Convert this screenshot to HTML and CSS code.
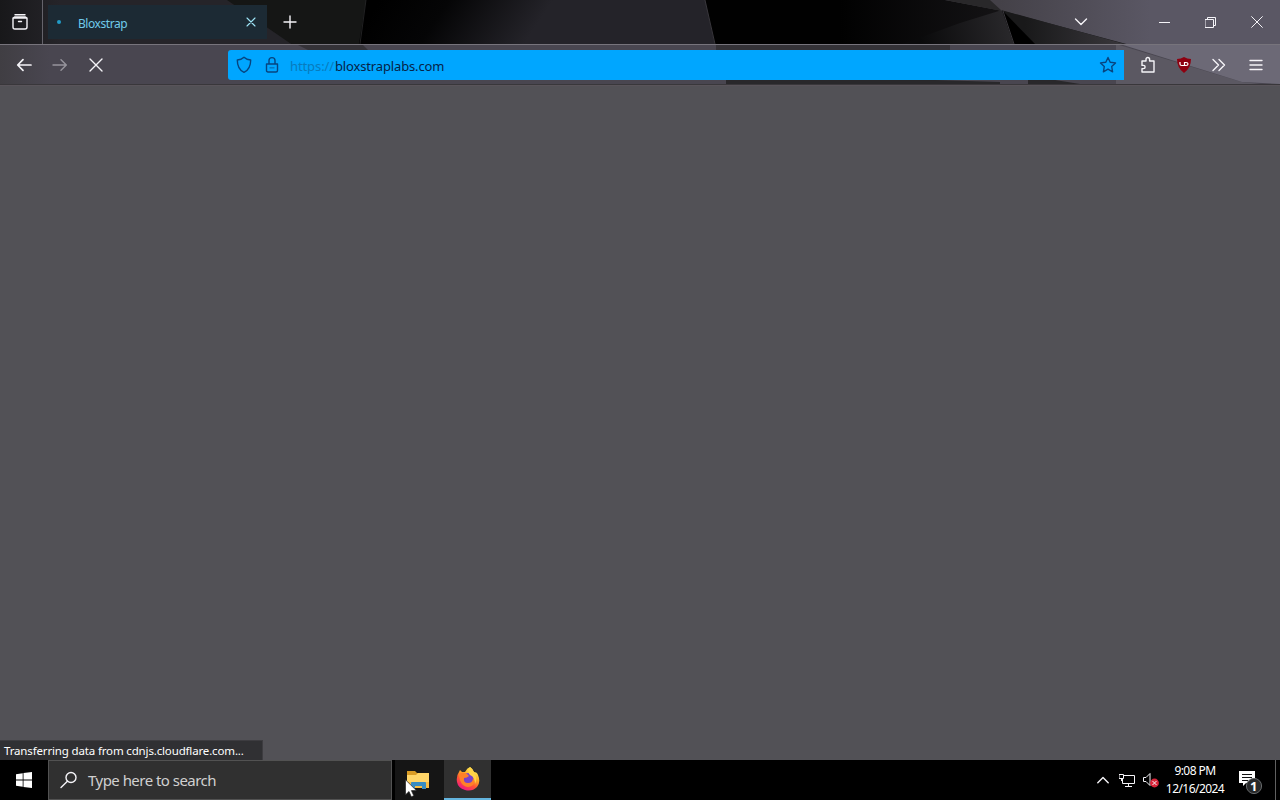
FILE: index.html
```html
<!DOCTYPE html>
<html lang="en">
<head>
<meta charset="utf-8">
<title>Bloxstrap</title>
<link rel="stylesheet" href="styles.css">
</head>
<body>
<div class="desktop">
  <header class="chrome">
    <svg class="theme" viewBox="0 0 1280 86" preserveAspectRatio="none" aria-hidden="true">
      <defs>
        <linearGradient id="mid" x1="380" y1="0" x2="500" y2="80" gradientUnits="userSpaceOnUse"><stop offset="0" stop-color="#000"/><stop offset=".4" stop-color="#050506"/><stop offset="1" stop-color="#242329"/></linearGradient>
        <linearGradient id="dark" x1="840" y1="0" x2="1010" y2="0" gradientUnits="userSpaceOnUse"><stop offset="0" stop-color="#010101"/><stop offset="1" stop-color="#151416"/></linearGradient>
        <linearGradient id="facet" x1="920" y1="40" x2="1010" y2="20" gradientUnits="userSpaceOnUse"><stop offset="0" stop-color="#0a0a0b"/><stop offset="1" stop-color="#29282b"/></linearGradient>
        <linearGradient id="right" x1="1000" y1="0" x2="1150" y2="0" gradientUnits="userSpaceOnUse"><stop offset="0" stop-color="#444148"/><stop offset="1" stop-color="#5a5764"/></linearGradient>
        <linearGradient id="slope" x1="1025" y1="0" x2="1130" y2="0" gradientUnits="userSpaceOnUse"><stop offset="0" stop-color="#19191a"/><stop offset="1" stop-color="#3b393e"/></linearGradient>
        <linearGradient id="left" x1="0" y1="0" x2="60" y2="0" gradientUnits="userSpaceOnUse"><stop offset="0" stop-color="#18181a"/><stop offset="1" stop-color="#252429"/></linearGradient>
        <linearGradient id="bar" x1="0" y1="0" x2="50" y2="0" gradientUnits="userSpaceOnUse"><stop offset="0" stop-color="#403e43"/><stop offset="1" stop-color="#494650"/></linearGradient>
      </defs>
      <path fill="url(#left)" d="M0 0H230L300 48V86H0z"/>
      <path fill="#151615" d="M227 0H366L358 50H300z"/>
      <path fill="url(#mid)" d="M366 0H705L716 50H358z"/>
      <path fill="url(#dark)" d="M705 0H990L1002 10L1016 50H716z"/>
      <path fill="url(#facet)" d="M1002 10L960 23L900 45H1014z"/>
      <path fill="url(#right)" d="M945 0H1280V86H1242L1130 45L1003 11z"/>
      <path fill="#29282a" d="M945 0H990L1002 11z"/>
      <path fill="url(#slope)" d="M1003 10.5L1128 45H1014z"/>
      <path fill="#000" d="M1002 10L1036 45H1014z"/>
      <path stroke="#454349" stroke-width=".8" fill="none" d="M705 0L715 44M1003 11L1014 44"/>
      <path stroke="#29292b" stroke-width=".8" d="M366 0L360 44"/>
      <path fill="url(#bar)" d="M0 44H1280V86H0z"/>
      <path fill="#5b5862" d="M1116 44L1242 82L1280 86H1116z"/>
      <path fill="#6c6976" d="M1120 44H1280V84L1242 82z"/>
      <path fill="#343237" d="M296 44H362L368 50H308zM716 45H950V50H716z"/>
      <path fill="#29282b" d="M726 80H935L1000 82V84H726zM1028 80H1055L1080 84H1028z"/>
      <path stroke="#77747c" d="M0 44.5H1280"/>
      <path stroke="#39373b" d="M0 84.5H1280"/>
      <path stroke="#59545a" d="M0 85.5H1280"/>
    </svg>
    <div class="tabs">
      <div class="view"><svg width="18" height="18" viewBox="0 0 18 18"><path d="M4 1.8h10M2 5h14v9q0 2-2 2H4q-2 0-2-2zM2 5l1.5-1h11L16 5M7.5 8.5h3" class="line"/></svg></div>
      <div class="tab"><i class="loading"></i><span class="tab-title">Bloxstrap</span><svg width="10" height="10" viewBox="0 0 10 10"><path d="M1 1l8 8M9 1L1 9" class="line"/></svg></div>
      <svg class="plus" width="14" height="14" viewBox="0 0 14 14"><path d="M7 1v12M1 7h12" class="line"/></svg>
      <div class="window-buttons">
        <svg width="14" height="10" viewBox="0 0 14 10"><path d="M1.5 2l5.5 5.5L12.5 2" class="line"/></svg>
        <svg class="min" width="11" height="11" viewBox="0 0 11 11"><path d="M0 5.5h11" class="line thin"/></svg>
        <svg class="restore" width="11" height="11" viewBox="0 0 11 11"><path d="M.5 2.5h8v8h-8zM2.5 2.5v-2h8v8h-2" class="line thin"/></svg>
        <svg class="close" width="12" height="12" viewBox="0 0 12 12"><path d="M.7.7l10.6 10.6M11.3.7L.7 11.3" class="line thin"/></svg>
      </div>
    </div>
    <div class="toolbar">
      <svg class="back" width="16" height="16" viewBox="0 0 16 16"><path d="M15 8H2M7 2.7L1.7 8 7 13.3" class="line bold"/></svg>
      <svg class="forward" width="16" height="16" viewBox="0 0 16 16"><path d="M1 8h13M9 2.7L14.3 8 9 13.3" class="line"/></svg>
      <svg class="stop" width="14" height="14" viewBox="0 0 14 14"><path d="M1 1l12 12M13 1L1 13" class="line"/></svg>
      <div class="address">
        <svg width="16" height="18" viewBox="0 0 16 18"><path d="M8 1.2Q10.5 3.7 14.7 4C14.7 10 12.5 14.3 8 16.4C3.5 14.3 1.3 10 1.3 4Q5.5 3.7 8 1.2z" class="ink"/></svg>
        <svg class="lock" width="14" height="18" viewBox="0 0 14 18"><path d="M1.5 8h11v6.5q0 1.5-1.5 1.5H3q-1.5 0-1.5-1.5zM4 8V4.6a3 3 0 0 1 6 0V8" class="ink"/><path d="M4.5 11.8h5" class="ink faint"/></svg>
        <span class="url"><span class="scheme">https://</span><span class="host">bloxstraplabs.com</span></span>
        <svg class="star" width="18" height="18" viewBox="0 0 18 18"><path d="M9 1.5l2.2 4.7 5.3.7-3.8 3.6.9 5.3L9 13.2l-4.6 2.6.9-5.3-3.8-3.6 5.3-.7z" class="ink"/></svg>
      </div>
      <div class="extensions">
        <svg width="16" height="18" viewBox="0 0 16 18"><path d="M2 5h4V3.3a1.8 1.8 0 0 1 3.6 0V5H14v11H2v-3.4h1.5a1.6 1.6 0 0 0 0-3.2H2z" class="line"/></svg>
        <svg class="ublock" width="14" height="16" viewBox="0 0 14 16"><path fill="#8e0010" d="M7 0q3 2 7 2 0 9-7 14Q0 11 0 2q4 0 7-2z"/><path fill="none" stroke="#fff" stroke-width="1.2" d="M3 5v2q0 1.5 1.7 1.5H7.5V5.5H9q2 0 2 1.5t-2 1.5H7.5"/></svg>
        <svg class="more" width="14" height="14" viewBox="0 0 14 14"><path d="M1 1.5L6.5 7 1 12.5M7 1.5L12.5 7 7 12.5" class="line"/></svg>
        <svg class="menu" width="14" height="14" viewBox="0 0 14 14"><path d="M1 2.5h12M1 7h12M1 11.5h12" class="line"/></svg>
      </div>
    </div>
  </header>
  <main class="page"><div class="status"><span>Transferring data from cdnjs.cloudflare.com...</span></div></main>
  <footer class="taskbar">
    <div class="start"><svg width="16" height="16" viewBox="0 0 16 16"><path fill="#fff" d="M0 2.2l6.7-1v6.3H0zM7.5 1L16 0v7.5H7.5zM0 8.4h6.7v6.4l-6.7-1zM7.5 8.4H16V16l-8.5-1.1z"/></svg></div>
    <div class="search"><svg width="18" height="18" viewBox="0 0 18 18"><circle cx="11" cy="6.5" r="5" class="line"/><path d="M7.4 10.2L1 16.5" class="line"/></svg><span>Type here to search</span></div>
    <div class="app explorer">
      <svg width="23" height="20" viewBox="0 0 23 20"><path fill="#d99b24" d="M0 1h8l2 2h11v4H0z"/><path fill="#ffd568" d="M0 5h9l2-2h11v15H0z"/><path fill="#f8bd42" d="M0 12h22v6H0z"/><path fill="#378cc1" d="M4 19v-6q0-1 1-1h13q1 0 1 1v6h-4v-3H8v3z"/></svg>
    </div>
    <div class="app firefox">
      <svg width="24" height="24" viewBox="0 0 24 24"><defs><linearGradient id="fox" x1="19" y1="2" x2="7" y2="23" gradientUnits="userSpaceOnUse"><stop stop-color="#fff35a"/><stop offset=".35" stop-color="#ffae24"/><stop offset=".65" stop-color="#ff5334"/><stop offset="1" stop-color="#ef1586"/></linearGradient></defs><path fill="url(#fox)" d="M14 0q3 2 4 5 3 0 4 3 3 7-1 12-5 5-12 3-7-2-8-8Q0 9 3 5l1-2 2 2 3 0q2-4 5-5z"/><circle cx="12" cy="11.5" r="5.5" fill="#7942c9"/><path fill="#ff8128" d="M3 7q4-3 8 0l2 2q-2 2-5 2-1 5 4 5 5 0 5-5 3 4 0 7-5 4-10 0-4-4-4-11z"/><path fill="#ffd447" d="M14 0q3 2 4 5 4 6 1 12 0-7-5-9-3-3 0-8z"/></svg>
    </div>
    <div class="tray">
      <svg class="chevron" width="12" height="8" viewBox="0 0 12 8"><path d="M.8 6.7L6 1.5l5.2 5.2" class="line"/></svg>
      <svg class="network" width="17" height="15" viewBox="0 0 17 15"><path d="M5.5 2.5h10v8h-12V6M9.5 10.5v3M6.5 13.5h6M.5 1.5h4v4h-4zM2.5 5.5v2" class="line thin"/></svg>
      <svg class="sound" width="18" height="16" viewBox="0 0 18 16"><path d="M1 5.5h2l4-4v12l-4-4H1z" class="line thin"/><circle cx="11.5" cy="11" r="4.4" fill="#d92338"/><path d="M9.8 9.3l3.4 3.4M13.2 9.3l-3.4 3.4" class="line thin"/></svg>
      <div class="clock"><span class="time">9:08 PM</span><span class="date">12/16/2024</span></div>
      <div class="notice"><svg width="26" height="26" viewBox="0 0 26 26"><path fill="#fff" d="M1 2h16v12H8l-3 3v-3H1z"/><path stroke="#111" d="M4 5.5h10M4 8.5h10M4 11.5h6"/><circle cx="16" cy="17" r="7.6" fill="#28292a" stroke="#66696b"/></svg><b>1</b></div>
      <i class="show-desktop"></i>
    </div>
  </footer>
  <svg class="pointer" width="12" height="19" viewBox="0 0 12 19"><path fill="#fff" stroke="#222" stroke-width=".7" d="M.5.8v15l3.5-3.3 2.3 5.3 2.5-1.1-2.4-5.1h5z"/></svg>
</div>
</body>
</html>
```
FILE: styles.css
```css
* { box-sizing: border-box; }
body { margin: 0; overflow: hidden; background: #525156; font-family: "Noto Sans", sans-serif; }
svg { display: block; flex: none; }
.desktop { position: relative; display: flex; flex-direction: column; width: 1280px; height: 800px; }
.chrome { position: relative; height: 86px; flex: none; background: #19191b; }
.theme { position: absolute; inset: 0; width: 1280px; height: 86px; }
.tabs, .toolbar { position: relative; display: flex; align-items: center; }
.tabs { height: 44px; }
.line { fill: none; stroke: #f5f4f8; stroke-width: 1.4; stroke-linecap: round; stroke-linejoin: round; }
.bold { stroke-width: 1.7; }
.thin { stroke-width: 1; stroke-linecap: square; }
.view { width: 43px; height: 44px; padding: 13px 0 0 11px; border-right: 1px solid #65636b; }
.tab { display: flex; align-items: center; width: 219px; height: 34px; margin-left: 5px; padding: 0 11px 0 9px; background: #1c2a34; color: #70cbea; font-size: 12px; }
.loading { width: 4px; height: 4px; margin-right: 17px; border-radius: 50%; background: #219cc8; }
.tab-title { flex: 1; margin-top: 2px; letter-spacing: -.45px; }
.tab .line { stroke: #9ee5f7; stroke-width: 1.1; }
.plus { margin-left: 16px; }
.window-buttons { display: flex; align-items: center; margin-left: auto; padding-right: 17px; }
.min { margin-left: 71px; }
.restore { margin-left: 35px; }
.close { margin-left: 35px; }
.toolbar { height: 42px; padding-left: 16px; }
.forward { margin-left: 20px; opacity: .45; }
.stop { margin-left: 21px; }
.address { display: flex; align-items: center; width: 896px; height: 30px; margin-left: 125px; padding: 0 7px 0 8px; border-radius: 3px 0 0 3px; background: #00a6ff; }
.ink { fill: none; stroke: #07447f; stroke-width: 1.4; stroke-linejoin: round; }
.faint { opacity: .5; }
.lock { margin-left: 13px; }
.url { flex: 1; margin: 2px 0 0 11px; font-size: 13px; white-space: nowrap; }
.scheme { display: inline-block; width: 45px; color: #087bbd; letter-spacing: -.1px; }
.host { color: #062347; letter-spacing: -.15px; }
.extensions { display: flex; align-items: center; margin-left: 16px; }
.ublock { margin-left: 21px; }
.more { margin-left: 21px; }
.menu { margin-left: 23px; }
.page { display: flex; align-items: flex-end; height: 674px; background: #525156; }
.status { display: flex; align-items: center; width: 263px; height: 20px; padding-left: 4px; background: #303033; border-top: 1px solid #3d3c40; border-right: 1px solid #3d3c40; color: #fff; font-size: 11.5px; letter-spacing: -.15px; white-space: nowrap; }
.taskbar { display: flex; height: 40px; background: #000; color: #fff; }
.start { width: 48px; padding: 12px 0 0 16px; }
.search { display: flex; align-items: center; width: 344px; height: 40px; padding-left: 11px; border: 1px solid #525252; background: #303030; color: #d0d0d0; font-size: 15px; }
.search span { margin-left: 10px; letter-spacing: -.53px; }
.app { width: 47px; height: 40px; }
.explorer { width: 49px; margin-left: 3px; padding: 10px 0 0 12px; background: #151515; }
.firefox { padding: 7px 0 0 12px; border-bottom: 2px solid #64b5df; background: #303030; }
.tray { display: flex; align-items: center; width: 183px; margin-left: auto; }
.network { margin-left: 10px; }
.sound { margin-left: 7px; }
.clock { display: flex; flex-direction: column; align-items: center; width: 60px; margin-left: 4px; font-size: 12px; line-height: 18px; white-space: nowrap; letter-spacing: -.55px; }
.notice { position: relative; margin: 4px 0 0 13px; }
.notice b { position: absolute; left: 12px; top: 8px; font-size: 13px; line-height: 18px; }
.show-desktop { height: 40px; margin-left: auto; margin-right: 4px; border-left: 1px solid #606060; }
.pointer { position: absolute; left: 405px; top: 779px; }
```
